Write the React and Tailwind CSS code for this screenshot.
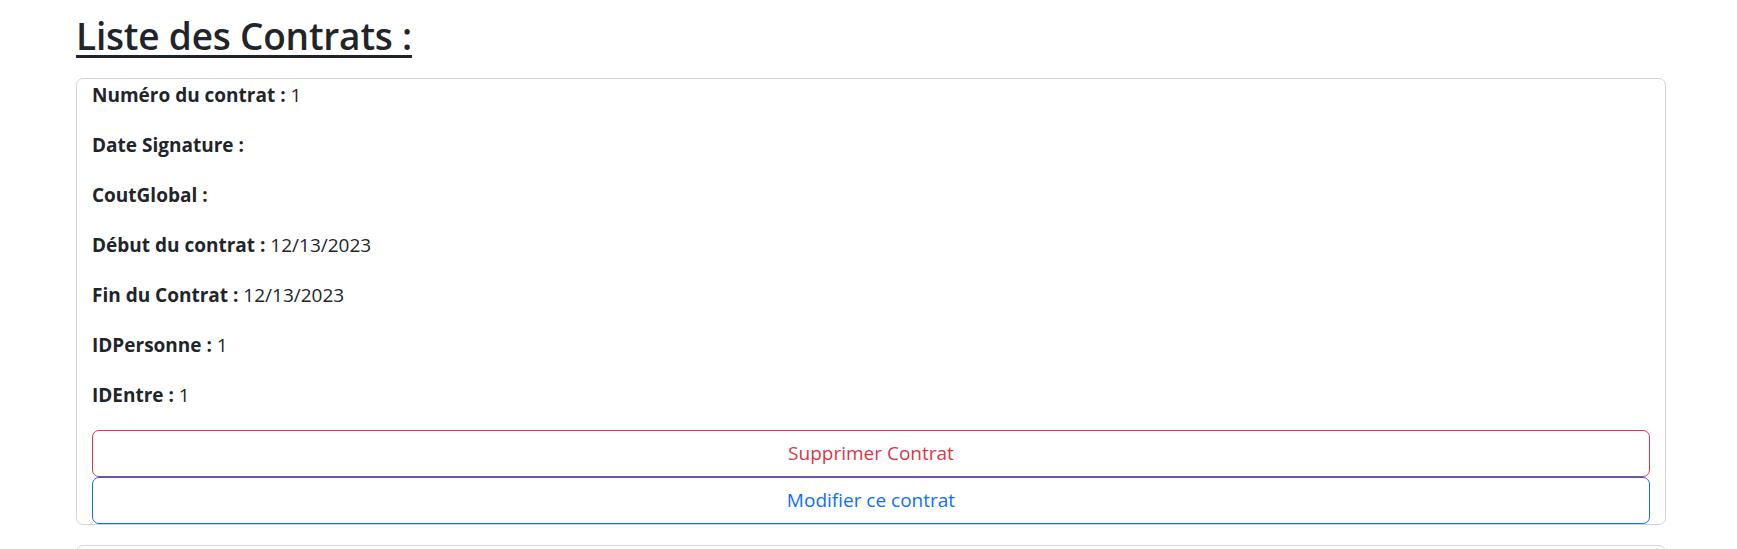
import React from "react";

const rows = [
  ["Numéro du contrat :", "1"],
  ["Date Signature :", ""],
  ["CoutGlobal :", ""],
  ["Début du contrat :", "12/13/2023"],
  ["Fin du Contrat :", "12/13/2023"],
  ["IDPersonne :", "1"],
  ["IDEntre :", "1"],
];

function Card() {
  return (
    <div className="border border-[#d4d4d4] rounded-[7px] px-[15px] pt-px mb-[20px] bg-white">
      {rows.map(([label, value], i) => (
        <p key={i} className="text-[19px] leading-[30px] mb-[20px] text-[#212529]">
          <span className="font-bold">{label}</span>
          {value ? " " + value : ""}
        </p>
      ))}
      <button className="block w-full h-[47px] border border-[#dc3545] text-[#dc3545] rounded-[7px] text-[19px] bg-white">
        Supprimer Contrat
      </button>
      <button className="block w-full h-[47px] border border-[#0d6efd] text-[#0d6efd] rounded-[7px] text-[19px] bg-white">
        Modifier ce contrat
      </button>
    </div>
  );
}

export default function App() {
  return (
    <div
      className="h-screen overflow-hidden bg-white text-[#212529]"
      style={{ fontFamily: '"Open Sans", "Noto Sans", sans-serif' }}
    >
      <div className="ml-[76px] w-[1590px] pt-[12px]">
        <h2 className="text-[37px] leading-[48px] font-semibold tracking-[-0.2px] underline decoration-[3px] underline-offset-[5px] mb-[18px]">
          Liste des Contrats :
        </h2>
        <Card />
        <div className="h-[40px] border border-[#d4d4d4] rounded-[7px] bg-white" />
      </div>
    </div>
  );
}
